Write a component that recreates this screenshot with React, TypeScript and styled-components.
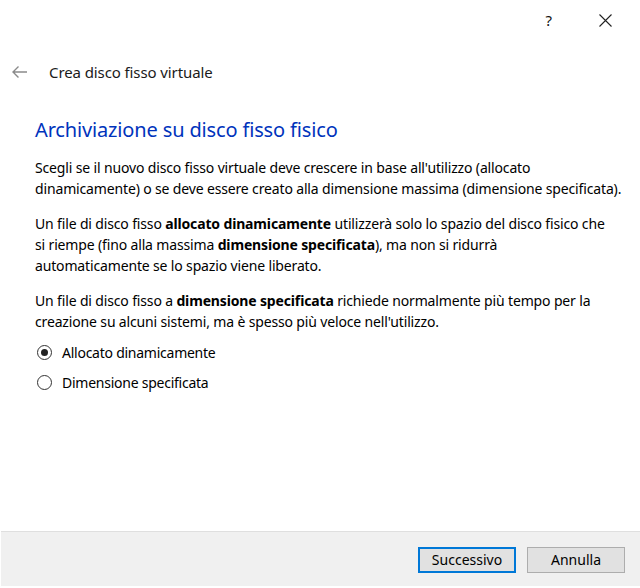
import React from "react";
import styled, { createGlobalStyle } from "styled-components";

const Global = createGlobalStyle`
  html, body { margin: 0; padding: 0; background: #ffffff; }
  body { font-family: "Noto Sans", "Open Sans", sans-serif; color: #000; }
  * { box-sizing: border-box; }
`;

const Window = styled.div`
  width: 640px;
  height: 588px;
  display: flex;
  flex-direction: column;
  background: #ffffff;
`;

const TitleBar = styled.div`
  height: 40px;
  display: flex;
  justify-content: flex-end;
  align-items: center;
  padding-right: 28px;
  gap: 47px;
`;

const TitleButton = styled.span`
  font-size: 15px;
  color: #111;
  display: flex;
  align-items: center;
`;

const Header = styled.div`
  display: flex;
  align-items: center;
  height: 24px;
  margin-top: 20px;
  padding-left: 11px;
  gap: 21px;
`;

const HeaderTitle = styled.div`
  font-size: 15px;
  letter-spacing: -0.1px;
  color: #1a1a1a;
`;

const Content = styled.div`
  padding: 0 0 0 35px;
  display: flex;
  flex-direction: column;
`;

const Heading = styled.h1`
  margin: 33px 0 0 0;
  font-weight: 400;
  font-size: 20px;
  line-height: 26px;
  letter-spacing: -0.15px;
  color: #0033bc;
`;

const Paragraph = styled.p`
  margin: 14px 0 0 0;
  font-size: 14px;
  line-height: 21px;
  letter-spacing: -0.15px;
  white-space: nowrap;
  color: #000;
`;

const RadioGroup = styled.div`
  display: flex;
  flex-direction: column;
  gap: 9px;
  margin-top: 10px;
`;

const RadioRow = styled.label`
  display: flex;
  align-items: center;
  gap: 10px;
  height: 21px;
  margin-left: 2px;
  font-size: 14px;
  letter-spacing: -0.25px;
`;

const RadioCircle = styled.span<{ $checked?: boolean }>`
  width: 15px;
  height: 15px;
  border-radius: 50%;
  border: 1px solid #333;
  display: flex;
  align-items: center;
  justify-content: center;
  &::after {
    content: "";
    width: 7px;
    height: 7px;
    border-radius: 50%;
    background: #222;
    display: ${(p) => (p.$checked ? "block" : "none")};
  }
`;

const Footer = styled.div`
  margin-top: auto;
  margin-bottom: 2px;
  margin-left: 1px;
  height: 55px;
  background: #f0f0f0;
  border-top: 1px solid #dfdfdf;
  display: flex;
  justify-content: flex-end;
  align-items: center;
  gap: 11px;
  padding-right: 15px;
  padding-top: 1px;
`;

const Button = styled.button<{ $primary?: boolean }>`
  width: 98px;
  height: 26px;
  background: #e1e1e1;
  border: ${(p) => (p.$primary ? "2px solid #0078d7" : "1px solid #adadad")};
  font-family: "Noto Sans", "Open Sans", sans-serif;
  font-size: 14px;
  color: #000;
  padding: 0;
`;

export default function App() {
  return (
    <>
      <Global />
      <Window>
        <TitleBar>
          <TitleButton>?</TitleButton>
          <TitleButton>
            <svg width="13" height="13" viewBox="0 0 13 13">
              <path d="M0.5 0.5 L12.5 12.5 M12.5 0.5 L0.5 12.5" stroke="#222" strokeWidth="1.1" />
            </svg>
          </TitleButton>
        </TitleBar>
        <Header>
          <svg width="17" height="14" viewBox="0 0 17 14">
            <path d="M16 7 H2 M7.5 1.5 L2 7 L7.5 12.5" stroke="#8a8a8a" strokeWidth="1.4" fill="none" />
          </svg>
          <HeaderTitle>Crea disco fisso virtuale</HeaderTitle>
        </Header>
        <Content>
          <Heading>Archiviazione su disco fisso fisico</Heading>
          <Paragraph>
            Scegli se il nuovo disco fisso virtuale deve crescere in base all'utilizzo (allocato
            <br />
            dinamicamente) o se deve essere creato alla dimensione massima (dimensione specificata).
          </Paragraph>
          <Paragraph>
            Un file di disco fisso <b>allocato dinamicamente</b> utilizzerà solo lo spazio del disco fisico che
            <br />
            si riempe (fino alla massima <b>dimensione specificata</b>), ma non si ridurrà
            <br />
            automaticamente se lo spazio viene liberato.
          </Paragraph>
          <Paragraph>
            Un file di disco fisso a <b>dimensione specificata</b> richiede normalmente più tempo per la
            <br />
            creazione su alcuni sistemi, ma è spesso più veloce nell'utilizzo.
          </Paragraph>
          <RadioGroup>
            <RadioRow>
              <RadioCircle $checked />
              Allocato dinamicamente
            </RadioRow>
            <RadioRow>
              <RadioCircle />
              Dimensione specificata
            </RadioRow>
          </RadioGroup>
        </Content>
        <Footer>
          <Button $primary>Successivo</Button>
          <Button>Annulla</Button>
        </Footer>
      </Window>
    </>
  );
}
